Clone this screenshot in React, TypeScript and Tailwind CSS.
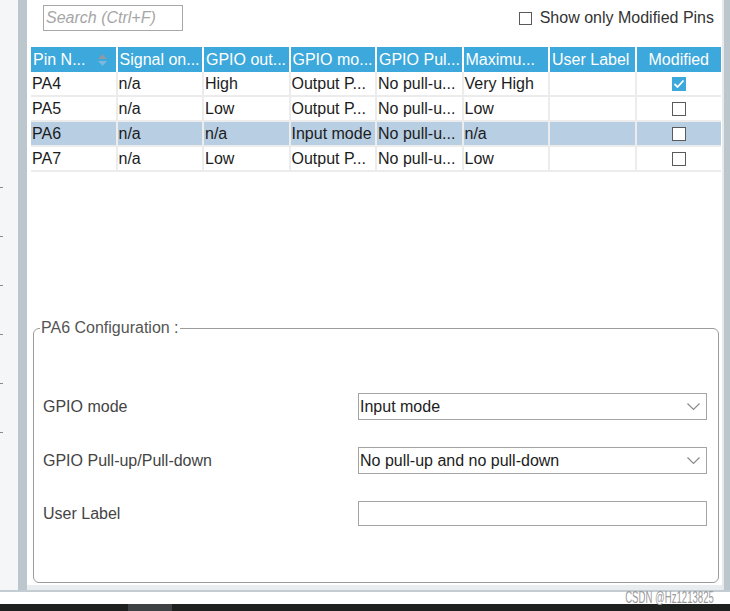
import React from "react";

type Row = {
  pin: string;
  signal: string;
  out: string;
  mode: string;
  pull: string;
  speed: string;
  label: string;
  modified: boolean;
  selected?: boolean;
};

const rows: Row[] = [
  { pin: "PA4", signal: "n/a", out: "High", mode: "Output P...", pull: "No pull-u...", speed: "Very High", label: "", modified: true },
  { pin: "PA5", signal: "n/a", out: "Low", mode: "Output P...", pull: "No pull-u...", speed: "Low", label: "", modified: false },
  { pin: "PA6", signal: "n/a", out: "n/a", mode: "Input mode", pull: "No pull-u...", speed: "n/a", label: "", modified: false, selected: true },
  { pin: "PA7", signal: "n/a", out: "Low", mode: "Output P...", pull: "No pull-u...", speed: "Low", label: "", modified: false },
];

const headers = ["Signal on...", "GPIO out...", "GPIO mo...", "GPIO Pul...", "Maximu...", "User Label"];

const SortIcon = () => (
  <svg width="9" height="12" viewBox="0 0 9 12" className="mr-[9px]">
    <polygon points="4.5,0 9,5 0,5" fill="#8c9ba6" />
    <polygon points="0,7 9,7 4.5,12" fill="#7db8da" />
  </svg>
);

const Chevron = () => (
  <svg width="13" height="8" viewBox="0 0 13 8" className="mr-[6px]">
    <polyline points="0.5,0.5 6.5,6.5 12.5,0.5" fill="none" stroke="#8a8a8a" strokeWidth="1.2" />
  </svg>
);

const CheckBox = ({ checked }: { checked: boolean }) =>
  checked ? (
    <div className="w-[14px] h-[14px] bg-[#3ca8dc] flex items-center justify-center">
      <svg width="12" height="10" viewBox="0 0 12 10">
        <polyline points="1.5,5 4.5,8 10.5,1.5" fill="none" stroke="#ffffff" strokeWidth="1.8" />
      </svg>
    </div>
  ) : (
    <div className="w-[14px] h-[14px] border border-[#5a5a5a] bg-white" />
  );

const Cell = ({ children, selected }: { children?: React.ReactNode; selected?: boolean }) => (
  <div className={`h-[23px] flex items-center pl-[1px] whitespace-nowrap overflow-hidden ${selected ? "bg-[#b8cee3]" : "bg-white"}`}>
    {children}
  </div>
);

export default function App() {
  return (
    <div className="w-[730px] h-[611px] overflow-hidden flex flex-col bg-white text-[16px] text-[#1c1c1c] font-['Liberation_Sans',Arial,sans-serif]">
      <div className="h-[590px] flex">
        {/* left rail */}
        <div className="w-[18px] bg-[#f4f6f7] flex flex-col pt-[187px] gap-[48px]">
          {[0, 1, 2, 3, 4, 5].map((i) => (
            <div key={i} className="w-[3px] h-[1px] bg-[#8a8a8a]" />
          ))}
        </div>
        <div className="w-[9px] bg-[#bcc6cd]" />

        {/* main panel */}
        <div className="flex-1 flex flex-col bg-white">
          <div className="h-[47px] flex items-start justify-between pl-[16px] pr-[8px]">
            <div className="mt-[5px] w-[140px] h-[26px] border border-[#a8a8a8] flex items-center pl-[2px]">
              <span className="italic text-[#a6a6a6]">Search (Ctrl+F)</span>
            </div>
            <div className="mt-[6px] flex items-center gap-[8px] text-[#333333]">
              <div className="w-[13px] h-[13px] border border-[#5a5a5a] bg-white" />
              <span>Show only Modified Pins</span>
            </div>
          </div>

          {/* pin table */}
          <div className="ml-[4px] w-[690px] flex flex-col">
            <div className="grid grid-cols-8 gap-x-[2px] h-[25px] text-white">
              <div className="bg-[#3ca8dc] flex items-center justify-between pl-[2px]">
                <span>Pin N...</span>
                <SortIcon />
              </div>
              {headers.map((h) => (
                <div key={h} className="bg-[#3ca8dc] flex items-center pl-[2px] whitespace-nowrap overflow-hidden">
                  {h}
                </div>
              ))}
              <div className="bg-[#3ca8dc] flex items-center justify-center">Modified</div>
            </div>
            {rows.map((r) => (
              <div key={r.pin} className="grid grid-cols-8 gap-x-[2px] bg-[#ececec] border-b-2 border-[#ececec]">
                <Cell selected={r.selected}>{r.pin}</Cell>
                <Cell selected={r.selected}>{r.signal}</Cell>
                <Cell selected={r.selected}>{r.out}</Cell>
                <Cell selected={r.selected}>{r.mode}</Cell>
                <Cell selected={r.selected}>{r.pull}</Cell>
                <Cell selected={r.selected}>{r.speed}</Cell>
                <Cell selected={r.selected}>{r.label}</Cell>
                <div className={`h-[23px] flex items-center justify-center ${r.selected ? "bg-[#b8cee3]" : "bg-white"}`}>
                  <CheckBox checked={r.modified} />
                </div>
              </div>
            ))}
          </div>

          {/* configuration */}
          <fieldset className="mt-auto ml-[6px] mr-[3px] h-[264px] border border-[#9c9c9c] rounded-[6px] pl-[9px] pr-[11px] pt-[56px] text-[#444444]">
            <legend className="-ml-[3px] px-[1px] text-[#555555] leading-[18px]">PA6 Configuration :</legend>
            <div className="flex flex-col gap-[27px]">
              <div className="flex items-center h-[27px]">
                <span className="w-[315px]">GPIO mode</span>
                <div className="flex-1 h-[27px] border border-[#a4a4a4] flex items-center justify-between pl-[1px] text-[#1c1c1c]">
                  <span>Input mode</span>
                  <Chevron />
                </div>
              </div>
              <div className="flex items-center h-[27px]">
                <span className="w-[315px]">GPIO Pull-up/Pull-down</span>
                <div className="flex-1 h-[27px] border border-[#a4a4a4] flex items-center justify-between pl-[1px] text-[#1c1c1c]">
                  <span>No pull-up and no pull-down</span>
                  <Chevron />
                </div>
              </div>
              <div className="flex items-center h-[25px]">
                <span className="w-[315px]">User Label</span>
                <div className="flex-1 h-[25px] border border-[#a4a4a4] bg-white" />
              </div>
            </div>
          </fieldset>
          <div className="h-[2px]" />
          <div className="h-[5px] bg-[#e9edf0]" />
        </div>

        {/* right rail */}
        <div className="w-[2px] bg-[#e6eaed]" />
        <div className="w-[6px] bg-[#bcc6cd]" />
      </div>

      <div className="h-[2px] bg-[#c3ccd2]" />
      <div className="h-[12px] flex items-center justify-end pr-[16px] bg-white">
        <span className="text-[16px] leading-[12px] text-[#9a9a9a] scale-x-[0.6] origin-right whitespace-nowrap">CSDN @Hz1213825</span>
      </div>
      <div className="h-[7px] bg-[#1d201f] flex">
        <div className="ml-[128px] w-[44px] bg-[#3e4143]" />
      </div>
    </div>
  );
}
